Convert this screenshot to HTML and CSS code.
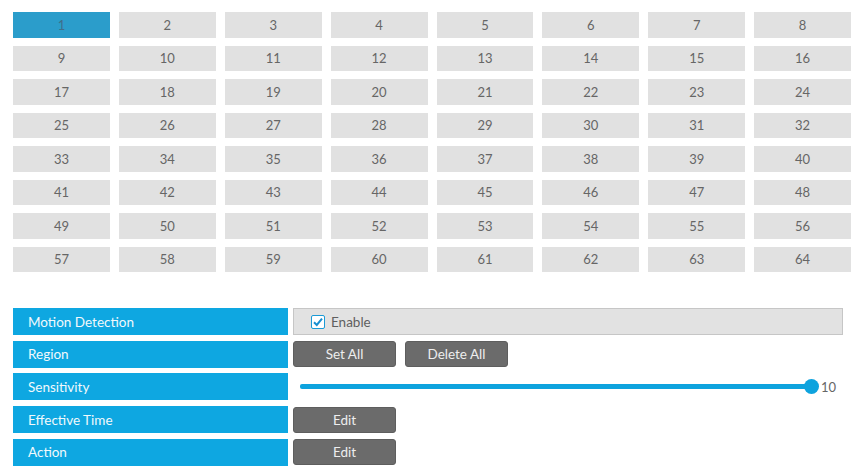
FILE: index.html
```html
<!DOCTYPE html>
<html>
<head>
<meta charset="utf-8">
<link rel="stylesheet" href="styles.css">
</head>
<body>
<div class="page">
  <div class="grid" id="grid"></div>
  <div class="form">
    <div class="row">
      <div class="label">Motion Detection</div>
      <div class="value">
        <div class="enable-box">
          <span class="check"><svg width="14" height="14" viewBox="0 0 14 14"><rect x="0.5" y="0.5" width="13" height="13" rx="1.5" fill="#fff" stroke="#1a9ad6"/><path d="M3 7.2 L5.8 10 L11 3.6" fill="none" stroke="#1a8fd0" stroke-width="2"/></svg></span>
          <span class="enable-text">Enable</span>
        </div>
      </div>
    </div>
    <div class="row">
      <div class="label">Region</div>
      <div class="value buttons">
        <button class="btn">Set All</button>
        <button class="btn">Delete All</button>
      </div>
    </div>
    <div class="row">
      <div class="label">Sensitivity</div>
      <div class="value slider-wrap">
        <div class="track"><span class="thumb"></span></div>
        <span class="slider-val">10</span>
      </div>
    </div>
    <div class="row">
      <div class="label">Effective Time</div>
      <div class="value buttons"><button class="btn">Edit</button></div>
    </div>
    <div class="row">
      <div class="label">Action</div>
      <div class="value buttons"><button class="btn">Edit</button></div>
    </div>
  </div>
</div>
<script src="script.js"></script>
</body>
</html>
```
FILE: script.js
```js
var g = document.getElementById('grid');
for (var i = 1; i <= 64; i++) {
  var d = document.createElement('div');
  d.className = 'cell' + (i === 1 ? ' active' : '');
  d.textContent = i;
  g.appendChild(d);
}
```
FILE: styles.css
```css
html, body { margin: 0; padding: 0; background: #fff; }
body { font-family: "Lato", "DejaVu Sans", sans-serif; font-size: 13px; font-weight: 400; }
.page { padding: 12px 6px 0 13px; width: 838px; }
.grid {
  display: grid;
  grid-template-columns: repeat(8, 1fr);
  grid-auto-rows: 25.5px;
  column-gap: 9px;
  row-gap: 8px;
}
.cell {
  background: #e1e1e1;
  color: #666;
  display: flex;
  align-items: center;
  justify-content: center;
  font-size: 13px;
}
.cell.active { background: #2b9dcb; color: #3f6f8a; }
.form { margin-top: 36px; display: flex; flex-direction: column; gap: 5.7px; }
.row { display: flex; height: 27px; gap: 5px; }
.label {
  width: 275px;
  background: #0ea7e1;
  color: #f2f9fc;
  display: flex;
  align-items: center;
  padding-left: 15px;
  box-sizing: border-box;
  font-size: 13.5px;
}
.value { flex: 1; display: flex; align-items: center; }
.enable-box {
  width: 550px;
  height: 27px;
  box-sizing: border-box;
  background: #e2e2e2;
  border: 1px solid #c6c6c6;
  display: flex;
  align-items: center;
  padding-left: 17px;
  gap: 6px;
  color: #5f5f5f;
  font-size: 13.5px;
}
.check { display: flex; }
.buttons { gap: 9px; }
.btn {
  width: 103px;
  height: 26px;
  background: #6b6b6b;
  border: 1px solid #5e5e5e;
  border-radius: 3px;
  color: #eee;
  font-family: inherit;
  font-weight: 400;
  font-size: 13.5px;
  padding: 0;
}
.slider-wrap { padding-left: 7px; gap: 3px; }
.track {
  position: relative;
  width: 512px;
  height: 5px;
  background: #0ea3de;
  border-radius: 2px;
}
.thumb {
  position: absolute;
  right: -7px;
  top: -5px;
  width: 15px;
  height: 15px;
  border-radius: 50%;
  background: #0ea3de;
}
.slider-val { margin-left: 6px; color: #666; font-size: 13px; }
```
